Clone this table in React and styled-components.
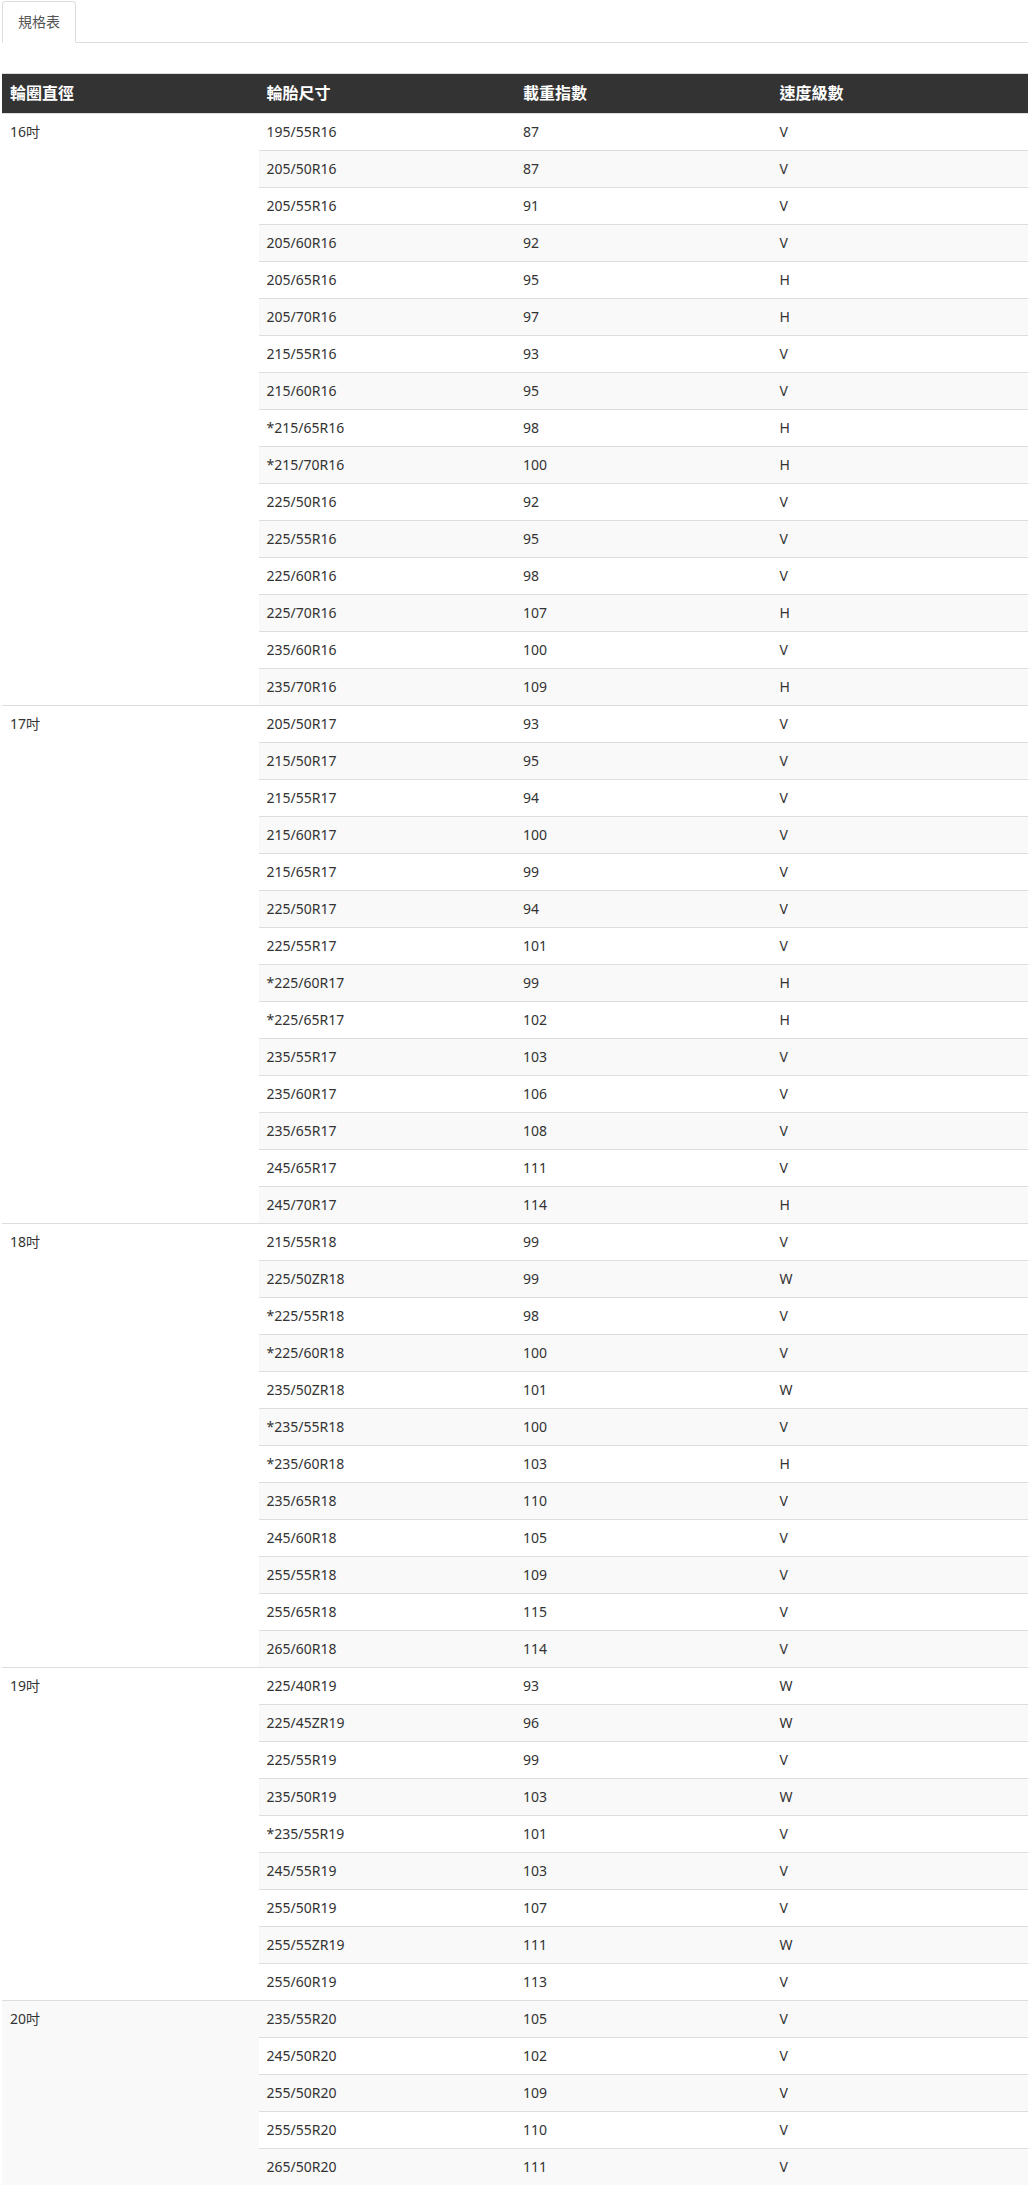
import React from 'react';
import styled, { createGlobalStyle } from 'styled-components';

const GlobalStyle = createGlobalStyle`
  body {
    margin: 0;
    background: #fff;
    color: #333;
    font-family: "Noto Sans", "Open Sans", "Noto Sans CJK TC", sans-serif;
    font-size: 14px;
    line-height: 1.42857;
  }
`;

// Tyre spec data, grouped by rim diameter
const groups = [
  {
    rim: '16吋',
    rows: [
      ['195/55R16', '87', 'V'],
      ['205/50R16', '87', 'V'],
      ['205/55R16', '91', 'V'],
      ['205/60R16', '92', 'V'],
      ['205/65R16', '95', 'H'],
      ['205/70R16', '97', 'H'],
      ['215/55R16', '93', 'V'],
      ['215/60R16', '95', 'V'],
      ['*215/65R16', '98', 'H'],
      ['*215/70R16', '100', 'H'],
      ['225/50R16', '92', 'V'],
      ['225/55R16', '95', 'V'],
      ['225/60R16', '98', 'V'],
      ['225/70R16', '107', 'H'],
      ['235/60R16', '100', 'V'],
      ['235/70R16', '109', 'H']
    ]
  },
  {
    rim: '17吋',
    rows: [
      ['205/50R17', '93', 'V'],
      ['215/50R17', '95', 'V'],
      ['215/55R17', '94', 'V'],
      ['215/60R17', '100', 'V'],
      ['215/65R17', '99', 'V'],
      ['225/50R17', '94', 'V'],
      ['225/55R17', '101', 'V'],
      ['*225/60R17', '99', 'H'],
      ['*225/65R17', '102', 'H'],
      ['235/55R17', '103', 'V'],
      ['235/60R17', '106', 'V'],
      ['235/65R17', '108', 'V'],
      ['245/65R17', '111', 'V'],
      ['245/70R17', '114', 'H']
    ]
  },
  {
    rim: '18吋',
    rows: [
      ['215/55R18', '99', 'V'],
      ['225/50ZR18', '99', 'W'],
      ['*225/55R18', '98', 'V'],
      ['*225/60R18', '100', 'V'],
      ['235/50ZR18', '101', 'W'],
      ['*235/55R18', '100', 'V'],
      ['*235/60R18', '103', 'H'],
      ['235/65R18', '110', 'V'],
      ['245/60R18', '105', 'V'],
      ['255/55R18', '109', 'V'],
      ['255/65R18', '115', 'V'],
      ['265/60R18', '114', 'V']
    ]
  },
  {
    rim: '19吋',
    rows: [
      ['225/40R19', '93', 'W'],
      ['225/45ZR19', '96', 'W'],
      ['225/55R19', '99', 'V'],
      ['235/50R19', '103', 'W'],
      ['*235/55R19', '101', 'V'],
      ['245/55R19', '103', 'V'],
      ['255/50R19', '107', 'V'],
      ['255/55ZR19', '111', 'W'],
      ['255/60R19', '113', 'V']
    ]
  },
  {
    rim: '20吋',
    rows: [
      ['235/55R20', '105', 'V'],
      ['245/50R20', '102', 'V'],
      ['255/50R20', '109', 'V'],
      ['255/55R20', '110', 'V'],
      ['265/50R20', '111', 'V']
    ]
  }
];

const App = () => {
  let index = 0;

  return (
    <Page>
      <GlobalStyle />
      <Tabs>
        <Tab active>規格表</Tab>
      </Tabs>
      <TabContent>
        <Table>
          <colgroup>
            <col style={{ width: '25%' }} />
            <col style={{ width: '25%' }} />
            <col style={{ width: '25%' }} />
            <col style={{ width: '25%' }} />
          </colgroup>
          <tbody>
            <tr>
              <HeadCell>輪圈直徑</HeadCell>
              <HeadCell>輪胎尺寸</HeadCell>
              <HeadCell>載重指數</HeadCell>
              <HeadCell>速度級數</HeadCell>
            </tr>
            {groups.map((group) =>
              group.rows.map((row, i) => {
                // header is the first tr, so data rows with odd index are striped
                const striped = index % 2 === 1;
                index += 1;
                return (
                  <tr key={row[0]}>
                    {i === 0 && (
                      <Cell rowSpan={group.rows.length} striped={striped}>
                        {group.rim}
                      </Cell>
                    )}
                    <Cell striped={striped}>{row[0]}</Cell>
                    <Cell striped={striped}>{row[1]}</Cell>
                    <Cell striped={striped}>{row[2]}</Cell>
                  </tr>
                );
              })
            )}
          </tbody>
        </Table>
      </TabContent>
    </Page>
  );
};

const Page = styled.div`
  padding: 1px 3px 0 2px;
`;

const Tabs = styled.ul`
  display: flex;
  margin: 0;
  padding: 0;
  list-style: none;
  border-bottom: 1px solid #ddd;
`;

const Tab = styled.li`
  margin-bottom: -1px;
  margin-right: 2px;
  padding: 10px 15px;
  line-height: 20px;
  font-size: 14px;
  color: #555;
  background: #fff;
  border: 1px solid ${props => (props.active ? '#ddd' : 'transparent')};
  border-bottom-color: transparent;
  border-radius: 4px 4px 0 0;
  cursor: default;
`;

const TabContent = styled.div`
  padding-top: 30px;
`;

const Table = styled.table`
  width: 100%;
  table-layout: fixed;
  border-collapse: collapse;
  border-spacing: 0;
`;

const HeadCell = styled.td`
  padding: 8px;
  font-size: 16px;
  line-height: 23px;
  font-weight: bold;
  color: #fff;
  background: #333;
  border-top: 1px solid #ddd;
  text-align: left;
  vertical-align: top;
`;

const Cell = styled.td`
  padding: 8px;
  line-height: 20px;
  font-size: 14px;
  color: #333;
  background: ${props => (props.striped ? '#f9f9f9' : '#fff')};
  border-top: 1px solid #ddd;
  text-align: left;
  vertical-align: top;
`;

export default App;
